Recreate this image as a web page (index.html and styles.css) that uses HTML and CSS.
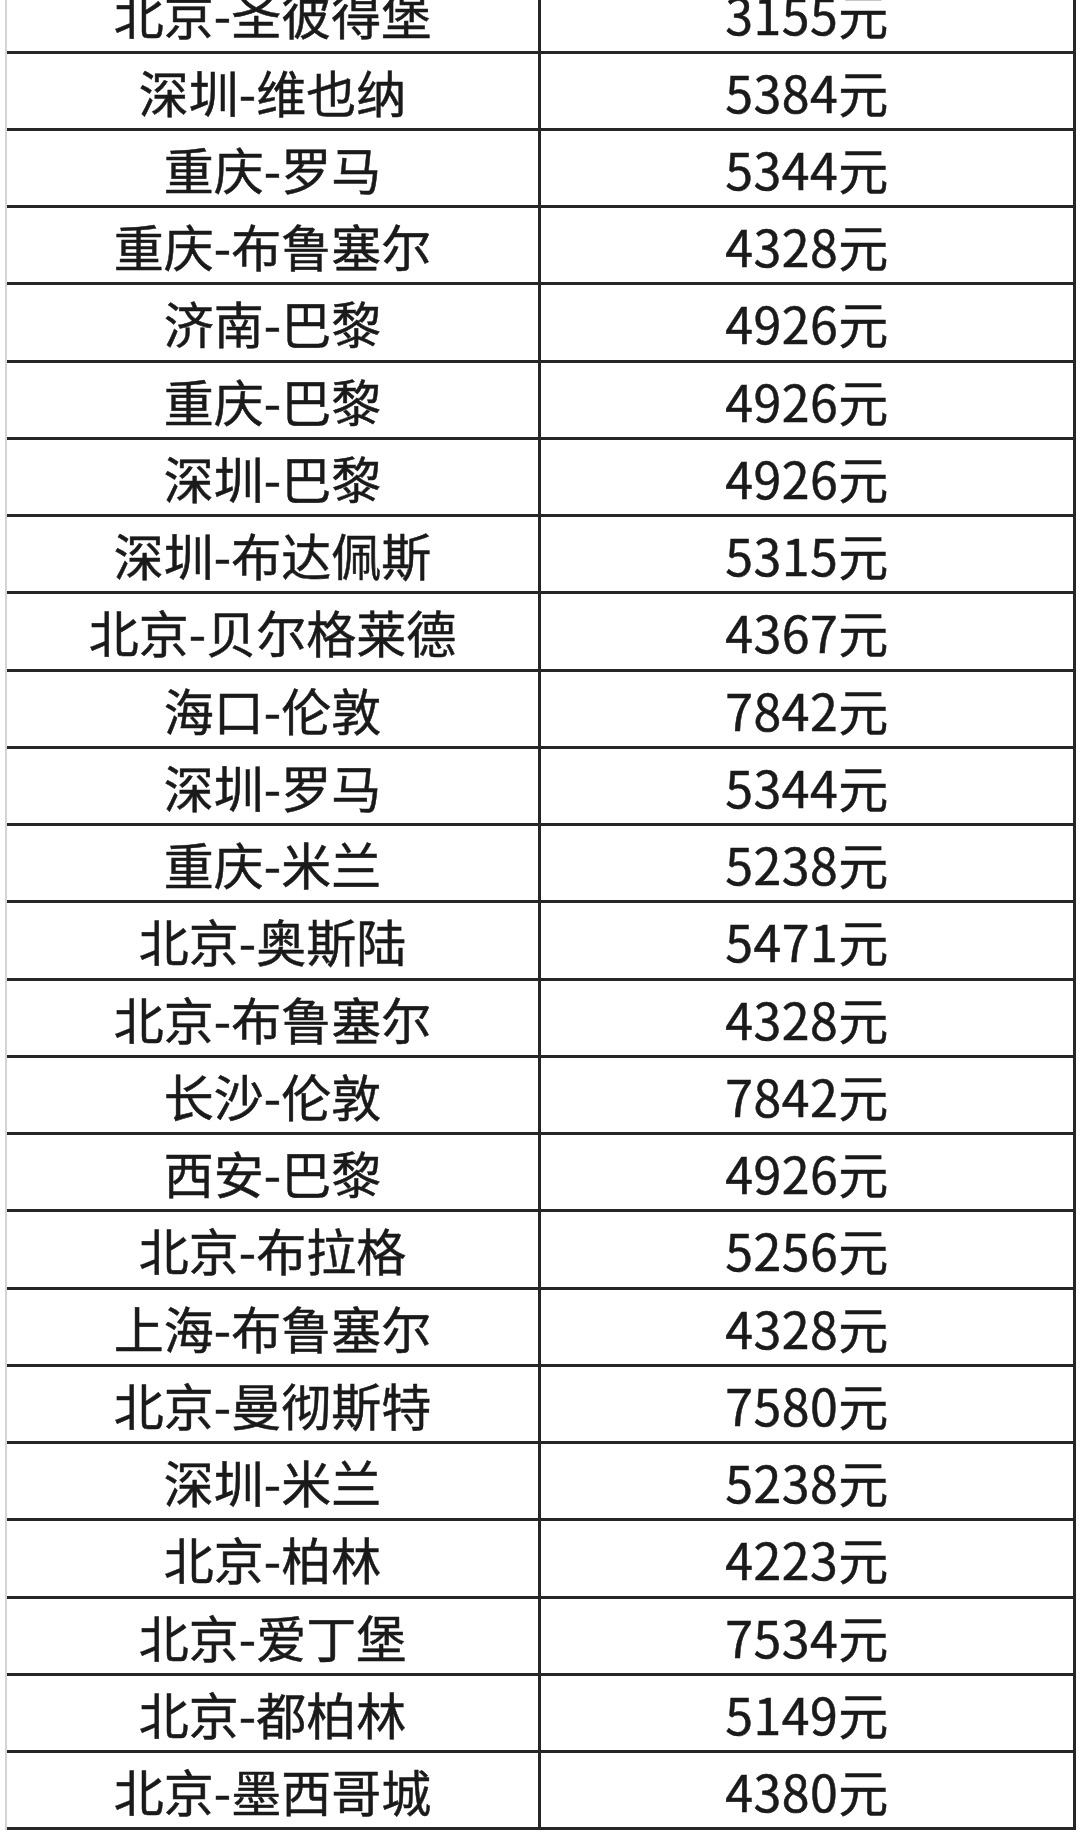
FILE: index.html
```html
<!DOCTYPE html>
<html lang="zh-CN">
<head>
<meta charset="utf-8">
<title>航线价格</title>
<link rel="stylesheet" href="styles.css">
</head>
<body>
<div class="table">
  <div class="row"><div class="cell route">北京-圣彼得堡</div><div class="cell price">3155元</div></div>
  <div class="row"><div class="cell route">深圳-维也纳</div><div class="cell price">5384元</div></div>
  <div class="row"><div class="cell route">重庆-罗马</div><div class="cell price">5344元</div></div>
  <div class="row"><div class="cell route">重庆-布鲁塞尔</div><div class="cell price">4328元</div></div>
  <div class="row"><div class="cell route">济南-巴黎</div><div class="cell price">4926元</div></div>
  <div class="row"><div class="cell route">重庆-巴黎</div><div class="cell price">4926元</div></div>
  <div class="row"><div class="cell route">深圳-巴黎</div><div class="cell price">4926元</div></div>
  <div class="row"><div class="cell route">深圳-布达佩斯</div><div class="cell price">5315元</div></div>
  <div class="row"><div class="cell route">北京-贝尔格莱德</div><div class="cell price">4367元</div></div>
  <div class="row"><div class="cell route">海口-伦敦</div><div class="cell price">7842元</div></div>
  <div class="row"><div class="cell route">深圳-罗马</div><div class="cell price">5344元</div></div>
  <div class="row"><div class="cell route">重庆-米兰</div><div class="cell price">5238元</div></div>
  <div class="row"><div class="cell route">北京-奥斯陆</div><div class="cell price">5471元</div></div>
  <div class="row"><div class="cell route">北京-布鲁塞尔</div><div class="cell price">4328元</div></div>
  <div class="row"><div class="cell route">长沙-伦敦</div><div class="cell price">7842元</div></div>
  <div class="row"><div class="cell route">西安-巴黎</div><div class="cell price">4926元</div></div>
  <div class="row"><div class="cell route">北京-布拉格</div><div class="cell price">5256元</div></div>
  <div class="row"><div class="cell route">上海-布鲁塞尔</div><div class="cell price">4328元</div></div>
  <div class="row"><div class="cell route">北京-曼彻斯特</div><div class="cell price">7580元</div></div>
  <div class="row"><div class="cell route">深圳-米兰</div><div class="cell price">5238元</div></div>
  <div class="row"><div class="cell route">北京-柏林</div><div class="cell price">4223元</div></div>
  <div class="row"><div class="cell route">北京-爱丁堡</div><div class="cell price">7534元</div></div>
  <div class="row"><div class="cell route">北京-都柏林</div><div class="cell price">5149元</div></div>
  <div class="row"><div class="cell route">北京-墨西哥城</div><div class="cell price">4380元</div></div>
</div>
</body>
</html>
```

FILE: styles.css
```css
html, body {
  margin: 0;
  padding: 0;
  background: #ffffff;
}

body {
  font-family: "Noto Sans CJK SC", "Noto Sans", sans-serif;
  color: #1a1a1a;
  overflow: hidden;
}

.table {
  margin: -23.76px 0 0 5px;
  width: 1071px;
  box-sizing: border-box;
  border-left: 2px solid #d4d4d4;
  border-right: 3px solid #262626;
}

.row {
  display: grid;
  grid-template-columns: 534px 1fr;
  height: 77.26px;
  box-sizing: border-box;
  border-bottom: 3px solid #262626;
}

.cell {
  display: flex;
  align-items: center;
  justify-content: center;
  font-size: 50px;
  line-height: 1;
  white-space: nowrap;
  -webkit-text-stroke: 0.5px #1a1a1a;
}

.route {
  border-right: 3px solid #262626;
}

.price {
  letter-spacing: 0.5px;
}
```
